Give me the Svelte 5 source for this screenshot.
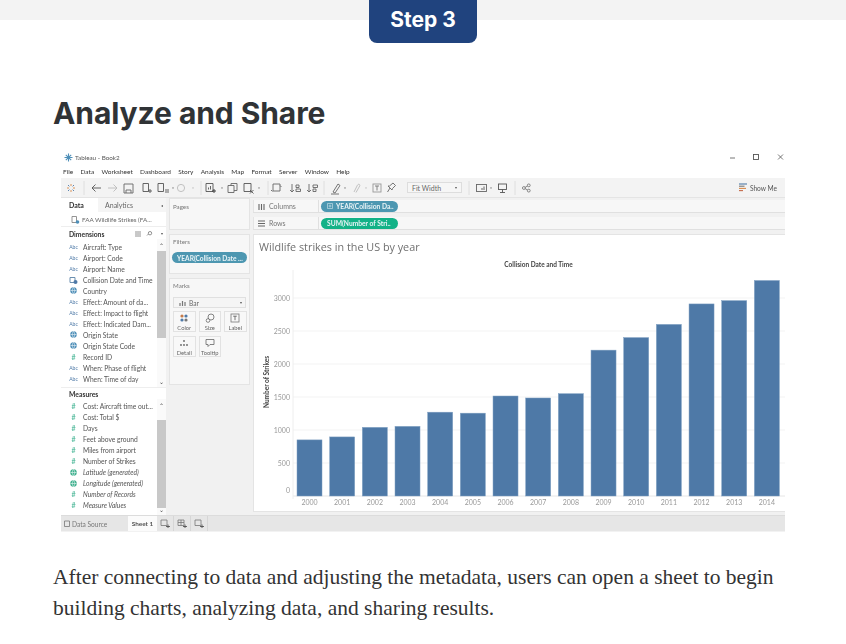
<script>
	const menu = ['File', 'Data', 'Worksheet', 'Dashboard', 'Story', 'Analysis', 'Map', 'Format', 'Server', 'Window', 'Help'];

	const dimensions = [
		['abc', 'Aircraft: Type'],
		['abc', 'Airport: Code'],
		['abc', 'Airport: Name'],
		['date', 'Collision Date and Time'],
		['geo', 'Country'],
		['abc', 'Effect: Amount of da...'],
		['abc', 'Effect: Impact to flight'],
		['abc', 'Effect: Indicated Dam...'],
		['geo', 'Origin State'],
		['geo', 'Origin State Code'],
		['num', 'Record ID'],
		['abc', 'When: Phase of flight'],
		['abc', 'When: Time of day']
	];

	const measures = [
		['num', 'Cost: Aircraft time out...'],
		['num', 'Cost: Total $'],
		['num', 'Days'],
		['num', 'Feet above ground'],
		['num', 'Miles from airport'],
		['num', 'Number of Strikes'],
		['geo', 'Latitude (generated)', true],
		['geo', 'Longitude (generated)', true],
		['num', 'Number of Records', true],
		['num', 'Measure Values', true]
	];

	const strikes = [
		[2000, 850], [2001, 895], [2002, 1040], [2003, 1055], [2004, 1270],
		[2005, 1255], [2006, 1515], [2007, 1485], [2008, 1550], [2009, 2210],
		[2010, 2400], [2011, 2600], [2012, 2910], [2013, 2960], [2014, 3265]
	];
	const ticks = [0, 500, 1000, 1500, 2000, 2500, 3000];

	// plot coords, origin is the left/top of the chart pane
	const baseY = 262;
	const yOf = (v) => baseY - v * 0.066;
	const xOf = (i) => 44 + i * 32.67;
</script>

{#snippet fieldRow(kind, label, italic)}
	<li class="field">
		<span class="fi {kind}">
			{#if kind === 'abc'}Abc{:else if kind === 'num'}#{:else if kind === 'geo'}
				<svg width="7" height="7" viewBox="0 0 8 8"><circle cx="4" cy="4" r="3.7" fill="currentColor" /><path d="M0.5 4h7M4 .5c-2 2-2 5 0 7M4 .5c2 2 2 5 0 7" stroke="#fff" stroke-width=".6" fill="none" /></svg>
			{:else}
				<svg width="9" height="8" viewBox="0 0 9 8"><path d="M1 1.500h5v5H1z" fill="none" stroke="#6b8fb0" stroke-width="1" /><circle cx="6.500" cy="6" r="2" fill="#4e79a7" /></svg>
			{/if}
		</span>
		<span class:it={italic}>{label}</span>
	</li>
{/snippet}

{#snippet markBtn(label)}
	<div class="mark-btn">
		<svg width="10" height="10" viewBox="0 0 10 10">
			{#if label === 'Color'}
				<circle cx="3" cy="3" r="1.600" fill="#c47a4a" /><circle cx="7" cy="3" r="1.600" fill="#4e79a7" /><circle cx="3" cy="7" r="1.600" fill="#4e79a7" /><circle cx="7" cy="7" r="1.600" fill="#777" />
			{:else if label === 'Size'}
				<circle cx="6" cy="4" r="3" fill="none" stroke="#666" stroke-width=".8" /><circle cx="3" cy="7.500" r="1.800" fill="#fff" stroke="#666" stroke-width=".8" />
			{:else if label === 'Label'}
				<rect x="1" y="1" width="8" height="8" fill="none" stroke="#777" stroke-width=".8" /><path d="M3.200 3.200h3.600M5 3.200v4" stroke="#555" stroke-width=".8" />
			{:else if label === 'Detail'}
				<circle cx="5" cy="3" r=".9" fill="#666" /><circle cx="2" cy="7" r=".9" fill="#666" /><circle cx="5" cy="7" r=".9" fill="#666" /><circle cx="8" cy="7" r=".9" fill="#666" />
			{:else}
				<path d="M1 1.500h8v5H5l-2 2v-2H1z" fill="none" stroke="#666" stroke-width=".8" />
			{/if}
		</svg>
		<span>{label}</span>
	</div>
{/snippet}

<div class="top-band">
	<div class="badge">Step 3</div>
</div>

<main>
	<h2>Analyze and Share</h2>

	<div class="shot">
		<div class="titlebar">
			<svg width="9" height="9" viewBox="0 0 9 9"><path d="M4.500 .5v8M.5 4.500h8M1.800 1.800l5.400 5.400M7.200 1.800L1.800 7.200" stroke="#4e8fb8" stroke-width="1.100" /></svg>
			<span>Tableau - Book2</span>
			<svg class="winbtns" width="62" height="9" viewBox="0 0 62 9">
				<path d="M7 5h5" stroke="#777" stroke-width="1" />
				<rect x="30.500" y="1.500" width="5" height="5" fill="none" stroke="#555" stroke-width=".9" />
				<path d="M55 1.500l5 5M60 1.500l-5 5" stroke="#555" stroke-width=".8" />
			</svg>
		</div>

		<nav class="menu">
			{#each menu as m}<span>{m}</span>{/each}
		</nav>

		<div class="toolbar">
			<svg class="strip" width="340" height="20" viewBox="0 0 340 20" fill="none" stroke="#777" stroke-width=".9">
				<g stroke="#d98a4a"><path d="M10 6v2M10 12v2M6 10h2M12 10h2" /></g>
				<g stroke="#4e79a7"><path d="M7 7l1.400 1.400M13 13l-1.400-1.400M13 7l-1.400 1.400M7 13l1.400-1.400" /></g>
				<path d="M23 3v14M207 3v14" stroke="#ddd" />
				<path d="M31 10h9M31 10l3.500-3.500M31 10l3.500 3.500" stroke="#555" />
				<path d="M47 10h9M56 10l-3.500-3.500M56 10l-3.500 3.500" stroke="#bbb" />
				<path d="M63 6h9v9h-9zM65 15v-3h5v3" stroke="#666" />
				<path d="M82 5.500h5.500v8H82z M87 13h4M89 11v4" stroke="#555" />
				<path d="M97 5.500h5.500v8H97z M105 11v4M107 11v4" stroke="#555" />
				<path d="M111 9.500h2l-1 1.400z" fill="#777" stroke="none" />
				<circle cx="120" cy="10" r="3.600" stroke="#bbb" />
				<path d="M131 9.500h2l-1 1.400z" fill="#bbb" stroke="none" />
				<path d="M140 3v14" stroke="#ddd" />
				<path d="M145 5.500h7v8h-7zM147.500 11.500v-2M149.500 11.500v-3.500" stroke="#555" />
				<path d="M151 13h4M153 11v4" stroke="#333" />
				<path d="M160 9.500h2l-1 1.400z" fill="#777" stroke="none" />
				<path d="M167 7.500h6v7h-6zM170 7.500v-2h6v7h-3" stroke="#666" />
				<path d="M183 5.500h7v8h-7zM189 12l3.500 3.500M192.500 12L189 15.500" stroke="#555" />
				<path d="M197 9.500h2l-1 1.400z" fill="#777" stroke="none" />
				<path d="M212 6h7v7h-7zM219 7.500l1.500 1.500M210 12l1.500 1.500" stroke="#666" />
				<path d="M231 6v8M229 12l2 2 2-2M235 7h3v2.500h-3zM235 11h4.500v2.500H235z" stroke="#666" />
				<path d="M248 6v8M246 12l2 2 2-2M252 7h4.500v2.500H252zM252 11h3v2.500h-3z" stroke="#666" />
				<path d="M263 3v14" stroke="#ddd" />
				<path d="M272 14l5-8 2 1.500-5 7.500zM270 16h8" stroke="#666" />
				<path d="M283 9.500h2l-1 1.400z" fill="#777" stroke="none" />
				<path d="M293 14l3.500-7c1-1.500 3 -.5 2.200 1l-3.700 6.500" stroke="#bbb" />
				<path d="M304 9.500h2l-1 1.400z" fill="#bbb" stroke="none" />
				<rect x="312" y="6" width="8" height="8" stroke="#999" />
				<path d="M314 8h4M316 8v4.500" stroke="#777" />
				<path d="M332 5l-3.500 3-1.500 0 4 4 .5-1.500 3-3zM329 10l-2.500 4" stroke="#666" />
			</svg>

			<div class="fit">
				<span>Fit Width</span>
				<i></i>
			</div>

			<svg class="strip2" width="60" height="20" viewBox="0 0 60 20" fill="none" stroke="#666" stroke-width=".9">
				<path d="M7 3v14M53 3v14" stroke="#ddd" />
				<rect x="14.500" y="6.500" width="10" height="7" />
				<path d="M20 12v-2M22 12V8.500" stroke="#555" />
				<path d="M28 9.500h2l-1 1.400z" fill="#777" stroke="none" />
				<rect x="36.500" y="6" width="8" height="5.500" stroke="#555" />
				<path d="M40.500 11.500v3M38 14.500h5" stroke="#555" />
			</svg>

			<svg width="9" height="10" viewBox="0 0 12 12" fill="none" stroke="#666" stroke-width="1">
				<circle cx="2.500" cy="6" r="1.900" /><circle cx="9" cy="2.500" r="1.900" /><circle cx="9" cy="9.500" r="1.900" />
				<path d="M4 5.200l3.300-1.800M4 6.800l3.300 1.800" />
			</svg>

			<div class="showme">
				<svg width="9" height="9" viewBox="0 0 9 9">
					<path d="M0 1h8" stroke="#4e79a7" stroke-width="1.100" />
					<path d="M0 3.200h5.500" stroke="#777" stroke-width="1.100" />
					<path d="M0 5.400h7" stroke="#d98a4a" stroke-width="1.100" />
					<path d="M0 7.600h4" stroke="#c46a4a" stroke-width="1.100" />
				</svg>
				<span>Show Me</span>
			</div>
		</div>

		<div class="workspace">
			<aside class="data-pane">
				<div class="tabs">
					<b>Data</b>
					<span class="analytics">Analytics</span>
					<span class="tab-dot">◂</span>
				</div>
				<div class="source">
					<svg width="9" height="9" viewBox="0 0 9 9"><path d="M1 1.500h4.500v6H1z" fill="none" stroke="#888" stroke-width=".9" /><circle cx="6.500" cy="7" r="1.800" fill="#4e8fb8" /></svg>
					<span>FAA Wildlife Strikes (FA...</span>
				</div>

				<div class="sec-head dims">
					<b>Dimensions</b>
					<span class="head-tools">
						<svg width="18" height="6" viewBox="0 0 18 6" fill="none" stroke="#777" stroke-width=".8"><path d="M1 0v6M3 0v6M5 0v6M12 4.500l1.500-1.500" /><circle cx="15" cy="2.200" r="1.700" /></svg>
						<i class="caret"></i>
					</span>
				</div>
				<div class="list-wrap dim-wrap">
					<ul>
						{#each dimensions as [kind, label]}
							{@render fieldRow(kind, label)}
						{/each}
					</ul>
					<div class="scroll">
						<span class="arrow">⌃</span>
						<div class="thumb dim-thumb"></div>
						<span class="arrow down">⌄</span>
					</div>
				</div>

				<div class="sec-head meas"><b>Measures</b></div>
				<div class="list-wrap meas-wrap">
					<ul>
						{#each measures as [kind, label, italic]}
							{@render fieldRow(kind, label, italic)}
						{/each}
					</ul>
					<div class="scroll">
						<span class="arrow">⌃</span>
						<div class="thumb meas-thumb"></div>
						<span class="arrow down">⌄</span>
					</div>
				</div>
			</aside>

			<section class="cards">
				<div class="card pages"><span class="card-title">Pages</span></div>
				<div class="card filters">
					<span class="card-title">Filters</span>
					<div class="pill teal filter-pill">YEAR(Collision Date ...</div>
				</div>
				<div class="card marks">
					<span class="card-title">Marks</span>
					<div class="mark-type">
						<svg width="7" height="6" viewBox="0 0 7 6"><path d="M1 6V3M3.500 6V1M6 6V2" stroke="#777" stroke-width="1.200" /></svg>
						<span>Bar</span>
						<i class="caret"></i>
					</div>
					<div class="mark-grid">
						{#each ['Color', 'Size', 'Label', 'Detail', 'Tooltip'] as b}
							{@render markBtn(b)}
						{/each}
					</div>
				</div>
			</section>

			<section class="viz">
				<div class="shelf">
					<div class="shelf-label">
						<svg width="7" height="7" viewBox="0 0 7 7"><path d="M1 1v6M3.500 1v6M6 1v6" stroke="#666" stroke-width="1.100" /></svg>
						<span>Columns</span>
					</div>
					<div class="pill teal shelf-pill">
						<svg width="6" height="6" viewBox="0 0 6 6"><path d="M.5.500h5v5h-5zM1.500 3h3M3 1.500v3" fill="none" stroke="#d5e8ef" stroke-width=".6" /></svg>
						YEAR(Collision Da..
					</div>
				</div>
				<div class="shelf">
					<div class="shelf-label">
						<svg width="7" height="7" viewBox="0 0 7 7"><path d="M0 1h7M0 3.500h7M0 6h7" stroke="#666" stroke-width="1.100" /></svg>
						<span>Rows</span>
					</div>
					<div class="pill green shelf-pill">SUM(Number of Stri..</div>
				</div>

				<div class="chart-pane">
					<svg width="532" height="278" viewBox="0 0 532 278">
						<text class="viz-title" x="6" y="17">Wildlife strikes in the US by year</text>
						<text class="axis-title" x="285.500" y="33" text-anchor="middle">Collision Date and Time</text>
						<text class="y-title" transform="translate(16 148) rotate(-90)" text-anchor="middle">Number of Strikes</text>

						{#each ticks as t}
							<line x1="40" x2="532" y1={yOf(t)} y2={yOf(t)} stroke={t === 0 ? '#e6e6e6' : '#f3f3f3'} />
							<text class="tick" x="37" y={t === 0 ? baseY - 3 : yOf(t) + 2.500} text-anchor="end">{t}</text>
						{/each}
						<line x1="40" x2="40" y1="36" y2={baseY + 3} stroke="#eee" />

						{#each strikes as [year, v], i}
							<rect x={xOf(i)} y={yOf(v)} width="25" height={v * 0.066} fill="#4e79a7" stroke="#7f9fc2" stroke-width=".5" />
							<text class="tick" x={xOf(i) + 12.500} y={baseY + 8.500} text-anchor="middle">{year}</text>
						{/each}
					</svg>
				</div>
			</section>
		</div>

		<footer class="sheets">
			<div class="ds">
				<svg width="6" height="7" viewBox="0 0 6 7"><path d="M.5 1h5v5.500h-5z" fill="none" stroke="#777" stroke-width=".8" /></svg>
				<span>Data Source</span>
			</div>
			<div class="sheet-tab">Sheet 1</div>
			{#each [0, 1, 2] as s}
				<div class="new-tab">
					<svg width="10" height="9" viewBox="0 0 10 9" fill="none" stroke="#777" stroke-width=".8">
						<path d="M1 1h6v5.500H1z" />
						<path d="M6 7.500h4M8 5.500v3.500" stroke="#444" />
						{#if s === 1}<path d="M1 3.500h6M4 1v5.500" />{/if}
					</svg>
				</div>
			{/each}
		</footer>
	</div>

	<p>After connecting to data and adjusting the metadata, users can open a sheet to begin building charts, analyzing data, and sharing results.</p>
</main>

<style>
	:global(body) {
		background: #fff;
		overflow: hidden;
	}

	.top-band {
		height: 20px;
		background: #f3f3f3;
		display: flex;
		justify-content: center;
	}
	.badge {
		width: 108px;
		height: 43px;
		flex: none;
		box-sizing: border-box;
		padding-bottom: 4px;
		display: flex;
		align-items: center;
		justify-content: center;
		background: #20437e;
		color: #fff;
		border-radius: 0 0 8px 8px;
		font: 700 21px/1 Inter, sans-serif;
	}

	main {
		padding: 0 53px;
	}
	h2 {
		margin: 0;
		padding-top: 75px;
		color: #303336;
		font: 700 30px/36px Inter, sans-serif;
		letter-spacing: -0.08px;
	}

	.shot {
		width: 724px;
		height: 382px;
		margin: 19px 0 0 8px;
		display: flex;
		flex-direction: column;
		overflow: hidden;
		font-family: Lato, sans-serif;
		font-size: 6.600px;
		color: #555;
		filter: blur(0.35px);
	}

	.titlebar {
		height: 15px;
		flex: none;
		display: flex;
		align-items: center;
		gap: 2px;
		padding-left: 3px;
		font-size: 6.300px;
		color: #555;
	}
	.winbtns {
		margin-left: auto;
	}
	.menu {
		height: 13px;
		flex: none;
		display: flex;
		align-items: center;
		gap: 7.300px;
		padding-left: 2px;
		color: #333;
		font-size: 6.500px;
	}

	.toolbar {
		height: 20px;
		flex: none;
		display: flex;
		align-items: center;
		background: #f3f3f3;
		border-bottom: 1px solid #e4e4e4;
		box-sizing: border-box;
	}
	.strip { flex: none; }
	.fit {
		width: 55px;
		height: 11px;
		margin-left: 6px;
		flex: none;
		box-sizing: border-box;
		display: flex;
		align-items: center;
		justify-content: space-between;
		padding: 0 4px;
		border: 1px solid #ddd;
		color: #666;
		font-size: 7px;
		background: #f6f6f6;
	}
	.fit i, .caret {
		width: 0;
		height: 0;
		border-left: 1.500px solid transparent;
		border-right: 1.500px solid transparent;
		border-top: 2px solid #555;
		display: block;
	}
	.strip2 { flex: none; }
	.showme {
		margin-left: auto;
		margin-right: 8px;
		display: flex;
		align-items: center;
		gap: 2px;
		color: #555;
	}

	.workspace {
		flex: 1;
		min-height: 0;
		display: flex;
		background: #f1f1f1;
	}

	.data-pane {
		width: 105px;
		flex: none;
		background: #fff;
		display: flex;
		flex-direction: column;
	}
	.tabs {
		height: 14px;
		flex: none;
		display: flex;
		align-items: center;
		background: #f5f5f5;
	}
	.tabs b {
		width: 37px;
		height: 100%;
		box-sizing: border-box;
		padding: 3px 0 0 8px;
		background: #fff;
		color: #333;
		font-weight: 700;
		font-size: 7px;
	}
	.analytics {
		padding-left: 7px;
		font-size: 7px;
		color: #666;
	}
	.tab-dot {
		margin-left: auto;
		margin-right: 3px;
		font-size: 4px;
	}
	.source {
		height: 14px;
		flex: none;
		display: flex;
		align-items: center;
		gap: 2px;
		padding-left: 10px;
		border-bottom: 1px solid #eee;
		color: #666;
		font-size: 6.300px;
	}
	.sec-head {
		flex: none;
		display: flex;
		align-items: center;
		padding-left: 8px;
		font-size: 6.800px;
		color: #333;
	}
	.dims { height: 11px; margin-top: 1px; }
	.meas { height: 12px; border-top: 1px solid #eee; box-sizing: border-box; }
	.head-tools {
		margin-left: auto;
		display: flex;
		align-items: center;
		gap: 8px;
		padding-right: 3px;
	}
	.list-wrap {
		display: flex;
	}
	.dim-wrap { height: 148px; flex: none; }
	.meas-wrap { flex: 1; min-height: 0; }
	ul {
		flex: 1;
		margin: 0;
		padding: 2px 0 0 4px;
		list-style: none;
	}
	.meas-wrap ul { padding-top: 1px; }
	.meas-wrap .field { height: 11.100px; }
	.field {
		height: 11px;
		display: flex;
		align-items: center;
		white-space: nowrap;
		color: #555;
		font-size: 6.700px;
	}
	.fi {
		width: 18px;
		flex: none;
		display: flex;
		justify-content: center;
		padding-right: 1px;
		box-sizing: border-box;
	}
	.fi.abc { color: #4e79a7; font-size: 5px; }
	.fi.geo, .fi.date { color: #4e8fb8; }
	.fi.num { color: #5fbfa3; font-weight: 700; font-size: 7px; }
	.it { font-style: italic; }
	.meas-wrap .fi.geo { color: #3fb08e; }

	.scroll {
		width: 9px;
		flex: none;
		padding-top: 3px;
		box-sizing: border-box;
		display: flex;
		flex-direction: column;
		align-items: center;
		background: #fafafa;
		color: #444;
	}
	.arrow {
		height: 7px;
		flex: none;
		font-size: 6px;
		line-height: 8px;
	}
	.arrow.down { margin-top: auto; line-height: 3px; }
	.thumb {
		width: 100%;
		background: #c8c8c8;
	}
	.dim-thumb { height: 87px; margin-top: 2px; }
	.meas-thumb { flex: 1; margin-top: 11px; }

	.cards {
		width: 81px;
		flex: none;
		margin: 0 3px;
		display: flex;
		flex-direction: column;
		gap: 4px;
		box-sizing: border-box;
	}
	.card {
		background: #f7f7f7;
		border: 1px solid #e4e4e4;
		box-sizing: border-box;
		padding: 3px;
	}
	.card-title { color: #777; font-size: 6.200px; line-height: 8px; display: block; }
	.pages { height: 32px; padding-top: 4px; }
	.filters { height: 40px; }
	.marks { height: 107px; }
	.pill {
		color: #e8f3f6;
		white-space: nowrap;
		border-radius: 6px;
		height: 11px;
		display: flex;
		align-items: center;
		gap: 3px;
		box-sizing: border-box;
	}
	.teal { background: #4d97b1; }
	.green { background: #13b287; }
	.filter-pill {
		width: 75px;
		margin: 6px 0 0 -1px;
		padding-left: 5px;
		font-weight: 700;
		font-size: 6.600px;
	}
	.mark-type {
		height: 11px;
		margin-top: 7px;
		box-sizing: border-box;
		display: flex;
		align-items: center;
		gap: 3px;
		padding: 0 3px 0 5px;
		border: 1px solid #e0e0e0;
		color: #666;
		background: #f5f5f5;
	}
	.mark-type .caret { margin-left: auto; }
	.mark-grid {
		margin-top: 3px;
		display: grid;
		grid-template-columns: repeat(3, 22.500px);
		gap: 4px 3px;
	}
	.mark-btn {
		height: 21px;
		box-sizing: border-box;
		border: 1px solid #e2e2e2;
		background: #f8f8f8;
		display: flex;
		flex-direction: column;
		align-items: center;
		justify-content: center;
		font-size: 5.800px;
		color: #666;
		gap: 1px;
	}

	.viz {
		flex: 1;
		min-width: 0;
		display: flex;
		flex-direction: column;
	}
	.shelf {
		height: 13px;
		flex: none;
		margin-top: 2px;
		display: flex;
		align-items: center;
		background: #f7f7f7;
		border-bottom: 1px solid #e0e0e0;
		box-sizing: border-box;
		color: #777;
		font-size: 7px;
	}
	.shelf + .shelf { margin-top: 4px; }
	.shelf-label {
		width: 66px;
		height: 100%;
		flex: none;
		box-sizing: border-box;
		display: flex;
		align-items: center;
		gap: 4px;
		padding-left: 4px;
		border-right: 1px solid #e0e0e0;
		border-left: 1px solid #e4e4e4;
	}
	.shelf-pill {
		width: 77px;
		margin-left: 2px;
		padding-left: 6px;
		font-size: 6.700px;
		font-weight: 700;
	}
	.chart-pane {
		height: 278px;
		flex: none;
		margin-top: 4px;
		background: #fff;
		border: solid #e4e4e4;
		border-width: 1px 0 1px 1px;
		box-sizing: border-box;
		overflow: hidden;
	}
	.chart-pane svg {
		display: block;
		margin: -1px 0 0 -1px;
	}
	.viz-title { font: 10.800px "Open Sans", sans-serif; fill: #707070; }
	.axis-title { font: 700 6.500px Lato, sans-serif; fill: #444; }
	.y-title { font: 700 6.500px Lato, sans-serif; fill: #444; }
	.tick { font: 7px Lato, sans-serif; fill: #999; }

	.sheets {
		height: 17px;
		flex: none;
		display: flex;
		align-items: center;
		background: #e6e6e6;
		border-top: 1px solid #dcdcdc;
		border-bottom: 1px solid #f2f2f2;
		box-sizing: border-box;
		color: #777;
	}
	.ds {
		width: 67px;
		flex: none;
		display: flex;
		align-items: center;
		gap: 2px;
		padding-left: 3px;
		box-sizing: border-box;
		font-size: 6.600px;
	}
	.sheet-tab {
		width: 29px;
		height: 100%;
		flex: none;
		display: flex;
		align-items: center;
		justify-content: center;
		background: #fbfbfb;
		font-weight: 700;
		color: #555;
		font-size: 6.400px;
	}
	.new-tab {
		width: 17px;
		height: 100%;
		flex: none;
		display: flex;
		align-items: center;
		justify-content: center;
		border-right: 1px solid #d6d6d6;
		box-sizing: border-box;
	}

	p {
		margin: 30px 0 0;
		color: #333;
		font: 21.500px/31px "Liberation Serif", serif;
	}
</style>
